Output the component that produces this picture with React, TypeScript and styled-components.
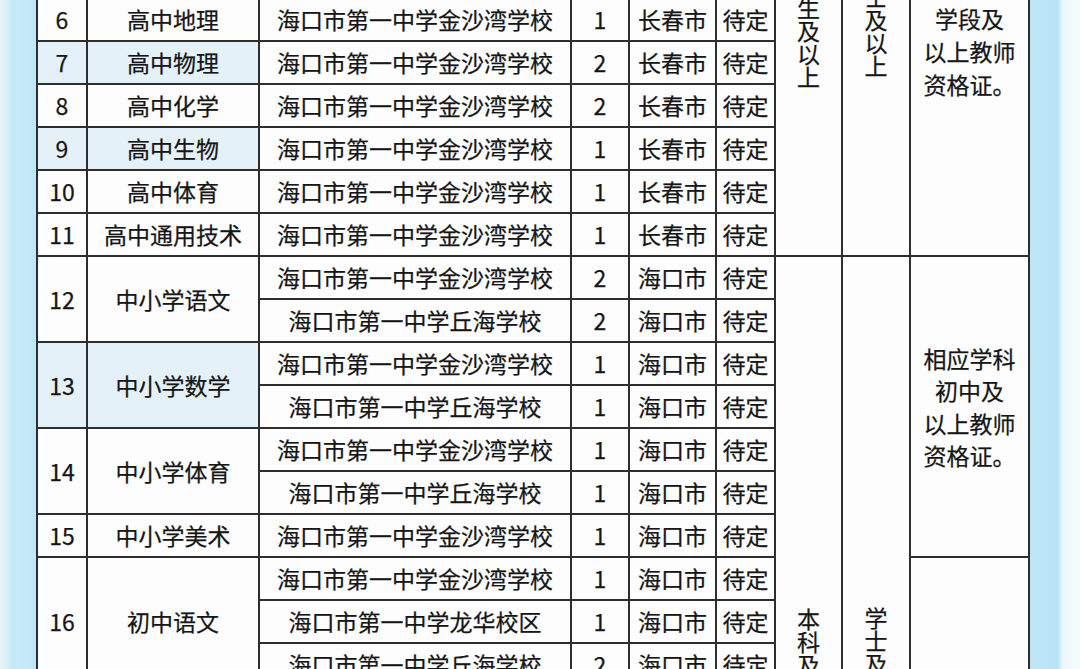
import React from "react";
import styled, { createGlobalStyle } from "styled-components";

const GlobalStyle = createGlobalStyle`
  html, body {
    margin: 0;
    padding: 0;
  }
  body {
    width: 1080px;
    height: 669px;
    overflow: hidden;
    background: linear-gradient(
      90deg,
      #e9f6fb 0px,
      #c8eaf7 12px,
      #bfe6f6 37px,
      #bfe6f6 1028px,
      #b8e5f6 1058px,
      #eef8fc 1063px,
      #f7fbfd 1080px
    );
    font-family: "Noto Sans CJK SC", "Noto Sans", sans-serif;
  }
`;

const Sheet = styled.div`
  padding-left: 36px;
  margin-top: -3px;
`;

const Table = styled.table`
  border-collapse: collapse;
  table-layout: fixed;
  width: 992px;
  background: #fdfdfd;
  color: #161616;
  font-size: 23px;
  -webkit-text-stroke: 0.25px #161616;
`;

const Row = styled.tr`
  height: 43px;
`;

const Cell = styled.td<{ $tint?: boolean; $top?: boolean }>`
  border: 2px solid #2e2e2e;
  padding: 0;
  text-align: center;
  vertical-align: ${(p) => (p.$top ? "top" : "middle")};
  background: ${(p) => (p.$tint ? "#e5f1f9" : "#fdfdfd")};
  white-space: nowrap;
  line-height: 1;
`;

const VerticalText = styled.div<{ $offset: number }>`
  display: inline-block;
  writing-mode: vertical-rl;
  text-orientation: upright;
  line-height: 24px;
  margin-top: ${(p) => p.$offset}px;
`;

const Note = styled.div<{ $offset?: number; $leading: number }>`
  line-height: ${(p) => p.$leading}px;
  margin-top: ${(p) => p.$offset ?? 0}px;
`;

const JSW = "海口市第一中学金沙湾学校";
const QH = "海口市第一中学丘海学校";
const LH = "海口市第一中学龙华校区";

const high = [
  { no: 6, subject: "高中地理", count: 1 },
  { no: 7, subject: "高中物理", count: 2, tint: true },
  { no: 8, subject: "高中化学", count: 2 },
  { no: 9, subject: "高中生物", count: 1, tint: true },
  { no: 10, subject: "高中体育", count: 1 },
  { no: 11, subject: "高中通用技术", count: 1 },
];

type Post = { school: string; count: number };

const mixed: { no: number; subject: string; tint?: boolean; posts: Post[] }[] = [
  { no: 12, subject: "中小学语文", posts: [{ school: JSW, count: 2 }, { school: QH, count: 2 }] },
  { no: 13, subject: "中小学数学", tint: true, posts: [{ school: JSW, count: 1 }, { school: QH, count: 1 }] },
  { no: 14, subject: "中小学体育", posts: [{ school: JSW, count: 1 }, { school: QH, count: 1 }] },
  { no: 15, subject: "中小学美术", posts: [{ school: JSW, count: 1 }] },
  { no: 16, subject: "初中语文", posts: [{ school: JSW, count: 1 }, { school: LH, count: 1 }, { school: QH, count: 2 }] },
];

const widths = [50, 172, 312, 58, 87, 59, 67, 68, 119];

const Lines = ({ lines, leading, offset }: { lines: string[]; leading: number; offset?: number }) => (
  <Note $leading={leading} $offset={offset}>
    {lines.map((l) => (
      <div key={l}>{l}</div>
    ))}
  </Note>
);

const App = () => {
  return (
    <>
      <GlobalStyle />
      <Sheet>
        <Table>
          <colgroup>
            {widths.map((w, i) => (
              <col key={i} style={{ width: w }} />
            ))}
          </colgroup>
          <tbody>
            {high.map((r, i) => (
              <Row key={r.no}>
                <Cell $tint={r.tint}>{r.no}</Cell>
                <Cell $tint={r.tint}>{r.subject}</Cell>
                <Cell>{JSW}</Cell>
                <Cell>{r.count}</Cell>
                <Cell>长春市</Cell>
                <Cell>待定</Cell>
                {i === 0 && (
                  <>
                    <Cell rowSpan={6} $top>
                      <VerticalText $offset={-2}>生及以上</VerticalText>
                    </Cell>
                    <Cell rowSpan={6} $top>
                      <VerticalText $offset={-13}>士及以上</VerticalText>
                    </Cell>
                    <Cell rowSpan={6} $top>
                      <Lines lines={["学段及", "以上教师", "资格证。"]} leading={33} offset={3} />
                    </Cell>
                  </>
                )}
              </Row>
            ))}
            {mixed.map((g, gi) =>
              g.posts.map((p, pi) => (
                <Row key={`${g.no}-${pi}`}>
                  {pi === 0 && (
                    <>
                      <Cell rowSpan={g.posts.length} $tint={g.tint}>
                        {g.no}
                      </Cell>
                      <Cell rowSpan={g.posts.length} $tint={g.tint}>
                        {g.subject}
                      </Cell>
                    </>
                  )}
                  <Cell>{p.school}</Cell>
                  <Cell>{p.count}</Cell>
                  <Cell>海口市</Cell>
                  <Cell>待定</Cell>
                  {gi === 0 && pi === 0 && (
                    <>
                      <Cell rowSpan={10} $top>
                        <VerticalText $offset={351}>本科及</VerticalText>
                      </Cell>
                      <Cell rowSpan={10} $top>
                        <VerticalText $offset={350}>学士及</VerticalText>
                      </Cell>
                      <Cell rowSpan={7}>
                        <Lines lines={["相应学科", "初中及", "以上教师", "资格证。"]} leading={32.5} />
                      </Cell>
                    </>
                  )}
                  {g.no === 16 && pi === 0 && <Cell rowSpan={3} />}
                </Row>
              ))
            )}
          </tbody>
        </Table>
      </Sheet>
    </>
  );
};

export default App;
